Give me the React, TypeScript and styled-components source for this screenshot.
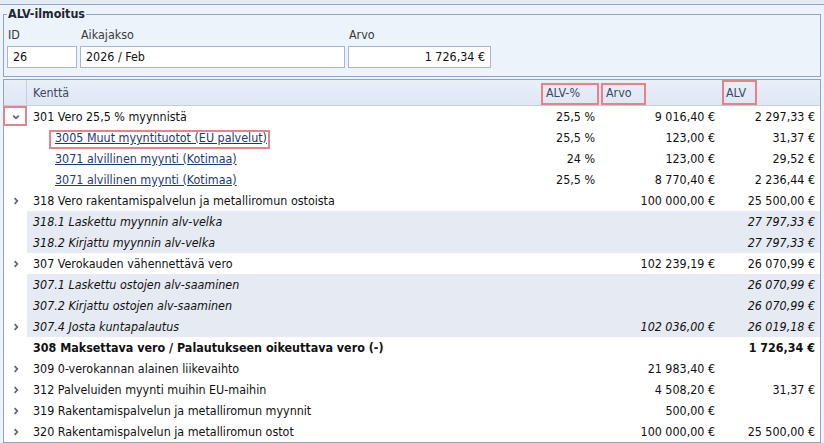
import React from 'react'
import styled, { createGlobalStyle, css } from 'styled-components'

const GlobalStyle = createGlobalStyle`
  html, body {
    margin: 0;
    padding: 0;
    background: #edf3fb;
  }
  body {
    font-family: 'DejaVu Sans Condensed', 'Liberation Sans', sans-serif;
    font-size: 12.4px;
    color: #1a1a1a;
  }
`

const Page = styled.div`
  width: 824px;
  height: 443px;
  overflow: hidden;
  box-sizing: border-box;
  border-top: 4px solid #e4ebf5;
  padding: 0 3px 0 3px;
`

const TopRule = styled.div`
  height: 1px;
  background: #93a7c6;
  margin: 0 -3px 2px;
`

const Fieldset = styled.fieldset`
  margin: 0;
  padding: 0 4px 3px 3px;
  border: 1px solid #8fa4c4;
  height: 70px;
  box-sizing: border-box;

  legend {
    padding: 0 1px;
    margin-left: 0;
    font-weight: bold;
    color: #1e2530;
    font-size: 12.4px;
    line-height: 14px;
  }
`

const FieldRow = styled.div`
  display: flex;
  gap: 3px;
  padding-top: 6px;
`

const Field = styled.label<{ $w: number }>`
  display: flex;
  flex-direction: column;
  width: ${(p) => p.$w}px;
  color: #3a3a3a;
  gap: 3px;

  span {
    line-height: 16px;
    padding-left: 1px;
  }
`

const Input = styled.div<{ $right?: boolean }>`
  height: 22px;
  box-sizing: border-box;
  background: #fff;
  border: 1px solid #a6b6cf;
  padding: 0 5px;
  line-height: 20px;
  color: #111;
  text-align: ${(p) => (p.$right ? 'right' : 'left')};
`

const Grid = styled.div`
  margin-top: 2px;
  border: 1px solid #8fa4c4;
  background: #fff;
`

const cols = css`
  display: grid;
  grid-template-columns: 23px 513px 60px 120px 1fr;
`

const HeaderRow = styled.div`
  ${cols};
  height: 25px;
  background: linear-gradient(#e9eff8, #dfe7f3);
  border-bottom: 1px solid #c3cfe0;
  color: #3b4a63;
`

const HeadCell = styled.div<{ $sep?: boolean }>`
  display: flex;
  align-items: center;
  padding-left: 6px;
  border-right: ${(p) => (p.$sep ? '1px solid #c3cfe0' : 'none')};
  position: relative;
`

const Mark = styled.span<{ $w: number; $h: number; $l: number; $t: number }>`
  position: absolute;
  left: ${(p) => p.$l}px;
  top: ${(p) => p.$t}px;
  width: ${(p) => p.$w}px;
  height: ${(p) => p.$h}px;
  border: 2px solid #e8828a;
  box-sizing: border-box;
  pointer-events: none;
`

const Row = styled.div<{ $shade?: boolean; $italic?: boolean; $bold?: boolean }>`
  ${cols};
  height: 21px;
  line-height: 21px;
  background: ${(p) => (p.$shade ? 'linear-gradient(to right, #fff 23px, #e6eaf2 23px)' : '#fff')};
  font-style: ${(p) => (p.$italic ? 'italic' : 'normal')};
  font-weight: ${(p) => (p.$bold ? 'bold' : 'normal')};
  color: #111;
`

const Expander = styled.div`
  position: relative;
  display: flex;
  align-items: center;
  justify-content: center;
  color: #5a6478;
`

const Name = styled.div<{ $indent?: boolean }>`
  padding-left: ${(p) => (p.$indent ? 28 : 6)}px;
  white-space: nowrap;
  position: relative;
`

const Num = styled.div`
  text-align: right;
  padding-right: 5px;
  white-space: nowrap;
`

const Link = styled.a`
  color: #1d3a78;
  text-decoration: underline;
  position: relative;
`

const Chevron = ({ down }: { down?: boolean }) => (
  <svg width="8" height="8" viewBox="0 0 8 8">
    {down ? (
      <path d="M1.2 2.6 L4 5.3 L6.8 2.6" fill="none" stroke="#5a6478" strokeWidth="1.7" />
    ) : (
      <path d="M2.6 1.2 L5.3 4 L2.6 6.8" fill="none" stroke="#5a6478" strokeWidth="1.7" />
    )}
  </svg>
)

type Line = {
  name: string
  pct?: string
  value?: string
  vat?: string
  kind?: 'link' | 'sub' | 'bold'
  expand?: 'open' | 'closed'
  markLink?: boolean
}

const S = '\u00a0'
const E = '\u00a0€'

const lines: Line[] = [
  { name: '301 Vero 25,5 % myynnistä', pct: '25,5 %', value: `9${S}016,40${E}`, vat: `2${S}297,33${E}`, expand: 'open' },
  { name: '3005 Muut myyntituotot (EU palvelut)', pct: '25,5 %', value: `123,00${E}`, vat: `31,37${E}`, kind: 'link', markLink: true },
  { name: '3071 alvillinen myynti (Kotimaa)', pct: '24 %', value: `123,00${E}`, vat: `29,52${E}`, kind: 'link' },
  { name: '3071 alvillinen myynti (Kotimaa)', pct: '25,5 %', value: `8${S}770,40${E}`, vat: `2${S}236,44${E}`, kind: 'link' },
  { name: '318 Vero rakentamispalvelun ja metalliromun ostoista', value: `100${S}000,00${E}`, vat: `25${S}500,00${E}`, expand: 'closed' },
  { name: '318.1 Laskettu myynnin alv-velka', vat: `27${S}797,33${E}`, kind: 'sub' },
  { name: '318.2 Kirjattu myynnin alv-velka', vat: `27${S}797,33${E}`, kind: 'sub' },
  { name: '307 Verokauden vähennettävä vero', value: `102${S}239,19${E}`, vat: `26${S}070,99${E}`, expand: 'closed' },
  { name: '307.1 Laskettu ostojen alv-saaminen', vat: `26${S}070,99${E}`, kind: 'sub' },
  { name: '307.2 Kirjattu ostojen alv-saaminen', vat: `26${S}070,99${E}`, kind: 'sub' },
  { name: '307.4 Josta kuntapalautus', value: `102${S}036,00${E}`, vat: `26${S}019,18${E}`, kind: 'sub', expand: 'closed' },
  { name: '308 Maksettava vero / Palautukseen oikeuttava vero (-)', vat: `1${S}726,34${E}`, kind: 'bold' },
  { name: '309 0-verokannan alainen liikevaihto', value: `21${S}983,40${E}`, expand: 'closed' },
  { name: '312 Palveluiden myynti muihin EU-maihin', value: `4${S}508,20${E}`, vat: `31,37${E}`, expand: 'closed' },
  { name: '319 Rakentamispalvelun ja metalliromun myynnit', value: `500,00${E}`, expand: 'closed' },
  { name: '320 Rakentamispalvelun ja metalliromun ostot', value: `100${S}000,00${E}`, vat: `25${S}500,00${E}`, expand: 'closed' },
]

export default function App() {
  return (
    <>
      <GlobalStyle />
      <Page>
        <TopRule />
        <Fieldset>
          <legend>ALV-ilmoitus</legend>
          <FieldRow>
            <Field $w={70}>
              <span>ID</span>
              <Input>26</Input>
            </Field>
            <Field $w={265}>
              <span>Aikajakso</span>
              <Input>2026 / Feb</Input>
            </Field>
            <Field $w={143}>
              <span>Arvo</span>
              <Input $right>1{S}726,34{E}</Input>
            </Field>
          </FieldRow>
        </Fieldset>

        <Grid>
          <HeaderRow>
            <HeadCell $sep />
            <HeadCell>Kenttä</HeadCell>
            <HeadCell>
              ALV-%
              <Mark $l={1} $t={3} $w={58} $h={22} />
            </HeadCell>
            <HeadCell>
              Arvo
              <Mark $l={1} $t={3} $w={45} $h={22} />
            </HeadCell>
            <HeadCell>
              ALV
              <Mark $l={2} $t={0} $w={35} $h={25} />
            </HeadCell>
          </HeaderRow>
          {lines.map((l, i) => (
            <Row key={i} $shade={l.kind === 'sub'} $italic={l.kind === 'sub'} $bold={l.kind === 'bold'}>
              <Expander>
                {l.expand && <Chevron down={l.expand === 'open'} />}
                {l.expand === 'open' && <Mark $l={-1} $t={0} $w={24} $h={20} />}
              </Expander>
              <Name $indent={l.kind === 'link'}>
                {l.kind === 'link' ? (
                  <Link href="#">
                    {l.name}
                    {l.markLink && <Mark $l={-6} $t={0} $w={221} $h={19} />}
                  </Link>
                ) : (
                  l.name
                )}
              </Name>
              <Num>{l.pct}</Num>
              <Num>{l.value}</Num>
              <Num>{l.vat}</Num>
            </Row>
          ))}
        </Grid>
      </Page>
    </>
  )
}
